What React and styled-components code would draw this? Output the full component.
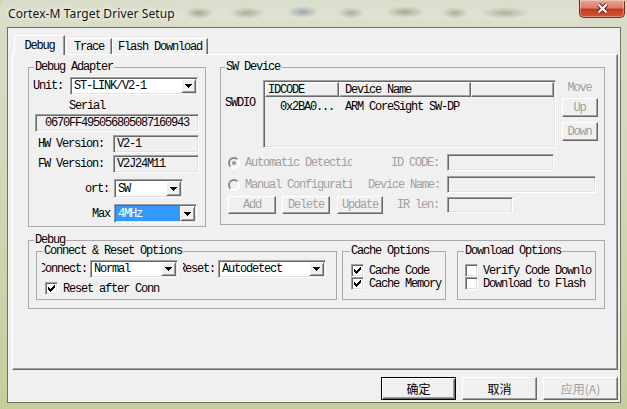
import React from "react";
import styled, { createGlobalStyle, css } from "styled-components";

const SONG = `"Liberation Mono", "DejaVu Sans Mono", monospace`;
const CJK = `"Noto Sans CJK SC", "Noto Sans", sans-serif`;

const GlobalStyle = createGlobalStyle`
  html, body { margin: 0; padding: 0; background: #cdd4b4; }
  *, *::before, *::after { box-sizing: border-box; }
`;

/* ---------- window chrome ---------- */

const Window = styled.div`
  width: 627px;
  height: 409px;
  display: flex;
  flex-direction: column;
  overflow: hidden;
  border-radius: 6px 6px 0 0;
  background: linear-gradient(180deg, #d9ddca 0%, #d3d9bd 35%, #c4ce9c 100%);
  font-family: ${SONG};
  font-size: 12px;
  line-height: 12px;
  letter-spacing: -1.2px;
  color: #000;
`;

const TitleBar = styled.div`
  height: 27px;
  flex: none;
  display: flex;
  align-items: flex-start;
`;

const Title = styled.div`
  padding: 7px 0 0 8px;
  font-family: "Noto Sans", "Open Sans", sans-serif;
  font-size: 12px;
  line-height: 13px;
  letter-spacing: 0.1px;
  white-space: nowrap;
  color: #141414;
  text-shadow: 0 0 5px #fff, 0 0 8px rgba(255, 255, 255, 0.9);
`;

/* blurred shapes of the window behind the glass title bar */
const GlassStrip = styled.div`
  flex: 1;
  height: 27px;
  background:
    radial-gradient(ellipse 14px 6px at 24px 13px, #a3a894, transparent),
    radial-gradient(ellipse 18px 6px at 72px 13px, #aab09c, transparent),
    radial-gradient(ellipse 16px 6px at 128px 12px, #9ea6ae, transparent),
    radial-gradient(ellipse 13px 6px at 176px 13px, #abb09e, transparent),
    radial-gradient(ellipse 19px 6px at 230px 12px, #a3a894, transparent),
    radial-gradient(ellipse 13px 6px at 280px 13px, #abb09e, transparent),
    radial-gradient(ellipse 24px 6px at 330px 13px, #adb2a0, transparent),
    linear-gradient(180deg, transparent 0%, rgba(255, 255, 255, 0.18) 60%, transparent 100%);
`;

const CloseButton = styled.div`
  flex: none;
  width: 46px;
  height: 18px;
  margin-right: 2px;
  border: 1px solid #7c2618;
  border-top: none;
  border-radius: 0 0 5px 5px;
  background: linear-gradient(180deg, #e7a593 0%, #dc7f6a 45%, #c43a22 55%, #d2553a 100%);
  box-shadow: inset 0 0 0 1px rgba(255, 255, 255, 0.35);
  display: flex;
  align-items: center;
  justify-content: center;
`;

const Client = styled.div`
  flex: 1;
  margin: 0 6px 6px 7px;
  border: 1px solid #6c7360;
  background: #f0f0f0;
  padding: 7px 2px 2px 4px;
  display: flex;
  flex-direction: column;
`;

/* ---------- tabs ---------- */

const TabStrip = styled.div`
  height: 19px;
  flex: none;
  display: flex;
  align-items: flex-end;
  padding-left: 2px;
  position: relative;
  z-index: 1;
`;

const Tab = styled.div`
  width: ${(p) => p.$w}px;
  height: ${(p) => (p.$active ? 20 : 16)}px;
  margin-bottom: ${(p) => (p.$active ? -1 : 0)}px;
  margin-left: ${(p) => p.$ml || 0}px;
  border: 1px solid;
  border-color: #fff #696969 transparent #fff;
  border-bottom: none;
  box-shadow: inset -1px 0 #a0a0a0;
  background: #f0f0f0;
  display: flex;
  align-items: center;
  justify-content: center;
  white-space: nowrap;
`;

const TabPanel = styled.div`
  height: 316px;
  flex: none;
  border: 1px solid;
  border-color: #fff #696969 #696969 #fff;
  box-shadow: inset -1px -1px #a0a0a0;
  padding: 6px 12px 0 15px;
  display: flex;
  flex-direction: column;
  gap: 7px;
`;

const PanelRow = styled.div`
  display: flex;
  align-items: flex-start;
  gap: 14px;
`;

/* ---------- group boxes ---------- */

const Group = styled.fieldset`
  margin: 0 0 0 ${(p) => p.$ml || 0}px;
  padding: 0;
  min-width: 0;
  flex: none;
  width: ${(p) => p.$w}px;
  height: ${(p) => p.$h}px;
  border: 1px solid #a9a9a9;
`;

const Legend = styled.legend`
  margin-left: ${(p) => p.$ml}px;
  padding: 0 1px;
  line-height: 12px;
  white-space: nowrap;
`;

const Body = styled.div`
  display: flex;
  flex-direction: ${(p) => (p.$row ? "row" : "column")};
  align-items: flex-start;
  padding-left: ${(p) => p.$pl || 0}px;
  margin-top: ${(p) => p.$mt || 0}px;
`;

const Row = styled.div`
  display: flex;
  align-items: center;
  flex: none;
  height: ${(p) => p.$h}px;
  margin-top: ${(p) => p.$mt || 0}px;
  padding-left: ${(p) => p.$pl || 0}px;
`;

const Label = styled.span`
  flex: none;
  white-space: nowrap;
  width: ${(p) => (p.$w ? `${p.$w}px` : "auto")};
  text-align: ${(p) => p.$align || "left"};
  padding-right: ${(p) => p.$pr || 0}px;
  margin-left: ${(p) => p.$ml || 0}px;
  color: ${(p) => (p.$disabled ? "#a0a0a0" : "inherit")};
`;

const ClipLabel = styled.span`
  flex: none;
  width: ${(p) => p.$w}px;
  margin: 0 3px 0 ${(p) => p.$ml}px;
  display: flex;
  justify-content: flex-end;
  overflow: hidden;
  white-space: nowrap;
`;

/* ---------- controls ---------- */

const sunken = css`
  border: 1px solid;
  border-color: #a0a0a0 #fff #fff #a0a0a0;
  box-shadow: inset 1px 1px #696969, inset -1px -1px #e3e3e3;
`;

const raised = css`
  border: 1px solid;
  border-color: #fff #696969 #696969 #fff;
  box-shadow: inset -1px -1px #a0a0a0;
`;

const Combo = styled.div`
  ${sunken};
  flex: none;
  width: ${(p) => p.$w}px;
  height: ${(p) => p.$h || 18}px;
  padding: 1px;
  background: #fff;
  display: flex;
`;

const ComboText = styled.div`
  flex: 1;
  display: flex;
  align-items: center;
  padding-left: 2px;
  white-space: nowrap;
  ${(p) =>
    p.$selected &&
    css`
      background: #3399ff;
      color: #fff;
    `}
`;

const DropButton = styled.div`
  ${raised};
  width: 15px;
  flex: none;
  background: #f0f0f0;
  box-shadow: inset 1px 1px #f0f0f0, inset -1px -1px #a0a0a0;
  display: flex;
  align-items: center;
  justify-content: center;
`;

const Field = styled.div`
  ${sunken};
  flex: none;
  width: ${(p) => p.$w}px;
  height: ${(p) => p.$h || 18}px;
  margin-left: ${(p) => p.$ml || 0}px;
  background: #f0f0f0;
  display: flex;
  align-items: center;
  justify-content: ${(p) => (p.$center ? "center" : "flex-start")};
  padding-left: ${(p) => (p.$center ? 0 : 3)}px;
  white-space: nowrap;
`;

const PushButton = styled.div`
  ${raised};
  flex: none;
  width: ${(p) => p.$w}px;
  height: ${(p) => p.$h}px;
  margin-left: ${(p) => p.$ml || 0}px;
  margin-top: ${(p) => p.$mt || 0}px;
  background: #f0f0f0;
  display: flex;
  align-items: center;
  justify-content: center;
  white-space: nowrap;
  color: ${(p) => (p.$disabled ? "#a0a0a0" : "#000")};
`;

const DialogButton = styled.div`
  width: 75px;
  height: 23px;
  border: 1px solid;
  border-color: #fff #696969 #696969 #fff;
  box-shadow: inset -1px -1px #a0a0a0;
  display: flex;
  align-items: center;
  justify-content: center;
  font-family: ${CJK};
  font-size: 12px;
  letter-spacing: 0;
  color: ${(p) => (p.$disabled ? "#a0a0a0" : "#000")};
  ${(p) =>
    p.$default &&
    css`
      border: 1px solid #000;
      box-shadow: inset 1px 1px #fff, inset -1px -1px #696969, inset -2px -2px #a0a0a0;
    `}
`;

const ButtonBar = styled.div`
  display: flex;
  justify-content: flex-end;
  gap: 6px;
  margin-top: 7px;
`;

const CheckBox = styled.span`
  ${sunken};
  flex: none;
  width: 13px;
  height: 13px;
  background: #fff;
  display: flex;
  align-items: center;
  justify-content: center;
`;

const CheckItem = styled.div`
  display: flex;
  align-items: center;
  gap: 5px;
  height: 13px;
  white-space: nowrap;
`;

const Radio = styled.span`
  flex: none;
  width: 12px;
  height: 12px;
  border-radius: 50%;
  border: 2px solid;
  border-color: #8a8a8a #fff #fff #8a8a8a;
  background: #f0f0f0;
  display: flex;
  align-items: center;
  justify-content: center;

  &::after {
    content: "";
    display: ${(p) => (p.$checked ? "block" : "none")};
    width: 4px;
    height: 4px;
    border-radius: 50%;
    background: #9a9a9a;
  }
`;

const RadioItem = styled.div`
  flex: none;
  width: 124px;
  display: flex;
  align-items: center;
  gap: 5px;
  overflow: hidden;
  white-space: nowrap;
  color: #a0a0a0;
`;

/* ---------- device list ---------- */

const ListView = styled.div`
  ${sunken};
  flex: none;
  width: 293px;
  height: 68px;
  padding: 1px;
  background: #f0f0f0;
  display: flex;
  flex-direction: column;
`;

const ListHeader = styled.div`
  display: flex;
  height: 15px;
  flex: none;
`;

const HeaderCell = styled.div`
  ${raised};
  width: ${(p) => (p.$w ? `${p.$w}px` : "auto")};
  flex: ${(p) => (p.$w ? "none" : "1")};
  padding-left: ${(p) => p.$pl}px;
  display: flex;
  align-items: center;
  white-space: nowrap;
`;

const ListRow = styled.div`
  display: flex;
  height: 12px;
  margin-top: 4px;
  white-space: nowrap;
`;

const ListCell = styled.div`
  flex: none;
  width: ${(p) => p.$w}px;
  text-align: ${(p) => p.$align || "left"};
  padding: 0 ${(p) => p.$pr || 0}px 0 ${(p) => p.$pl || 0}px;
`;

const SideLabel = styled.div`
  flex: none;
  width: 42px;
  padding: 17px 0 0 4px;
`;

const MoveColumn = styled.div`
  flex: none;
  width: 37px;
  margin-left: 5px;
  display: flex;
  flex-direction: column;
  align-items: center;
`;

const MoveTitle = styled.div`
  margin-top: 2px;
  color: #a0a0a0;
`;

const LeftCell = styled.div`
  flex: none;
  width: 140px;
  display: flex;
  align-items: center;
`;

/* ---------- glyphs ---------- */

const DropArrow = () => (
  <svg width="7" height="4" viewBox="0 0 7 4" shapeRendering="crispEdges">
    <path d="M0 0h7v1H0zM1 1h5v1H1zM2 2h3v1H2zM3 3h1v1H3z" fill="#000" />
  </svg>
);

const CheckMark = () => (
  <svg width="7" height="7" viewBox="0 0 7 7" shapeRendering="crispEdges">
    <path
      d="M0 2h1v3H0zM1 3h1v3H1zM2 4h1v3H2zM3 3h1v3H3zM4 2h1v3H4zM5 1h1v3H5zM6 0h1v3H6z"
      fill="#000"
    />
  </svg>
);

const CloseGlyph = () => (
  <svg width="13" height="11" viewBox="0 0 13 11">
    <path d="M2.5 1.5 L10.5 9.5 M10.5 1.5 L2.5 9.5" stroke="#5b1c12" strokeWidth="4.2" />
    <path d="M2.5 1.5 L10.5 9.5 M10.5 1.5 L2.5 9.5" stroke="#fff" strokeWidth="2.4" />
  </svg>
);

const ComboBox = ({ w, h, value, selected }) => (
  <Combo $w={w} $h={h}>
    <ComboText $selected={selected}>{value}</ComboText>
    <DropButton>
      <DropArrow />
    </DropButton>
  </Combo>
);

const Check = ({ checked, children }) => (
  <CheckItem>
    <CheckBox>{checked && <CheckMark />}</CheckBox>
    <span>{children}</span>
  </CheckItem>
);

export default function App() {
  return (
    <>
      <GlobalStyle />
      <Window>
        <TitleBar>
          <Title>Cortex-M Target Driver Setup</Title>
          <GlassStrip />
          <CloseButton>
            <CloseGlyph />
          </CloseButton>
        </TitleBar>

        <Client>
          <TabStrip>
            <Tab $active $w={51}>Debug</Tab>
            <Tab $w={46} $ml={1}>Trace</Tab>
            <Tab $w={96}>Flash Download</Tab>
          </TabStrip>

          <TabPanel>
            <PanelRow>
              <Group $w={178} $h={166}>
                <Legend $ml={5}>Debug Adapter</Legend>
                <Body>
                  <Row $h={18} $mt={4} $pl={4}>
                    <Label $w={37}>Unit:</Label>
                    <ComboBox w={128} value="ST-LINK/V2-1" />
                  </Row>
                  <Row $h={12} $mt={5} $pl={40}>
                    <Label>Serial</Label>
                  </Row>
                  <Row $h={18} $mt={2} $pl={6}>
                    <Field $w={164} $center>
                      0670FF495056805087160943
                    </Field>
                  </Row>
                  <Row $h={18} $mt={3} $pl={9}>
                    <Label $w={75}>HW Version:</Label>
                    <Field $w={86}>V2-1</Field>
                  </Row>
                  <Row $h={18} $mt={2} $pl={9}>
                    <Label $w={75}>FW Version:</Label>
                    <Field $w={86}>V2J24M11</Field>
                  </Row>
                  <Row $h={19} $mt={6}>
                    <Label $w={85} $align="right" $pr={5}>
                      ort:
                    </Label>
                    <ComboBox w={69} h={19} value="SW" />
                  </Row>
                  <Row $h={19} $mt={6}>
                    <Label $w={85} $align="right" $pr={4}>
                      Max
                    </Label>
                    <ComboBox w={83} h={19} value="4MHz" selected />
                  </Row>
                </Body>
              </Group>

              <Group $w={385} $h={164}>
                <Legend $ml={4}>SW Device</Legend>
                <Body>
                  <Body $row $mt={7}>
                    <SideLabel>SWDIO</SideLabel>
                    <ListView>
                      <ListHeader>
                        <HeaderCell $w={74} $pl={2}>
                          IDCODE
                        </HeaderCell>
                        <HeaderCell $w={132} $pl={5}>
                          Device Name
                        </HeaderCell>
                        <HeaderCell $pl={2} />
                      </ListHeader>
                      <ListRow>
                        <ListCell $w={74} $align="right" $pr={5}>
                          0x2BA0...
                        </ListCell>
                        <ListCell $w={200} $pl={6}>
                          ARM CoreSight SW-DP
                        </ListCell>
                      </ListRow>
                    </ListView>
                    <MoveColumn>
                      <MoveTitle>Move</MoveTitle>
                      <PushButton $w={36} $h={19} $mt={4} $disabled>
                        Up
                      </PushButton>
                      <PushButton $w={36} $h={19} $mt={5} $disabled>
                        Down
                      </PushButton>
                    </MoveColumn>
                  </Body>

                  <Row $h={17} $mt={6} $pl={7}>
                    <LeftCell>
                      <RadioItem>
                        <Radio $checked />
                        <span>Automatic Detection</span>
                      </RadioItem>
                    </LeftCell>
                    <Label $w={71} $align="right" $disabled>
                      ID CODE:
                    </Label>
                    <Field $w={107} $h={17} $ml={8} />
                  </Row>
                  <Row $h={17} $mt={5} $pl={7}>
                    <LeftCell>
                      <RadioItem>
                        <Radio />
                        <span>Manual Configuration</span>
                      </RadioItem>
                    </LeftCell>
                    <Label $w={71} $align="right" $disabled>
                      Device Name:
                    </Label>
                    <Field $w={149} $h={17} $ml={8} />
                  </Row>
                  <Row $h={18} $mt={3} $pl={7}>
                    <LeftCell>
                      <PushButton $w={48} $h={18} $disabled>
                        Add
                      </PushButton>
                      <PushButton $w={48} $h={18} $ml={6} $disabled>
                        Delete
                      </PushButton>
                      <PushButton $w={46} $h={18} $ml={7} $disabled>
                        Update
                      </PushButton>
                    </LeftCell>
                    <Label $w={71} $align="right" $disabled>
                      IR len:
                    </Label>
                    <Field $w={66} $h={16} $ml={8} />
                  </Row>
                </Body>
              </Group>
            </PanelRow>

            <Group $w={577} $h={75}>
              <Legend $ml={5}>Debug</Legend>
              <Body $row $pl={7} $mt={-1}>
                <Group $w={301} $h={55}>
                  <Legend $ml={6}>Connect &amp; Reset Options</Legend>
                  <Body>
                    <Row $h={18} $mt={3}>
                      <ClipLabel $w={45} $ml={5}>
                        Connect:
                      </ClipLabel>
                      <ComboBox w={88} value="Normal" />
                      <ClipLabel $w={32} $ml={5}>
                        Reset:
                      </ClipLabel>
                      <ComboBox w={108} value="Autodetect" />
                    </Row>
                    <Row $h={13} $mt={4} $pl={8}>
                      <Check checked>Reset after Conn</Check>
                    </Row>
                  </Body>
                </Group>

                <Group $w={104} $h={55} $ml={5}>
                  <Legend $ml={7}>Cache Options</Legend>
                  <Body $pl={8} $mt={7}>
                    <Check checked>Cache Code</Check>
                    <Check checked>Cache Memory</Check>
                  </Body>
                </Group>

                <Group $w={139} $h={55} $ml={11}>
                  <Legend $ml={6}>Download Options</Legend>
                  <Body $pl={7} $mt={7}>
                    <Check>Verify Code Downlo</Check>
                    <Check>Download to Flash</Check>
                  </Body>
                </Group>
              </Body>
            </Group>
          </TabPanel>

          <ButtonBar>
            <DialogButton $default>确定</DialogButton>
            <DialogButton>取消</DialogButton>
            <DialogButton $disabled>应用(A)</DialogButton>
          </ButtonBar>
        </Client>
      </Window>
    </>
  );
}
